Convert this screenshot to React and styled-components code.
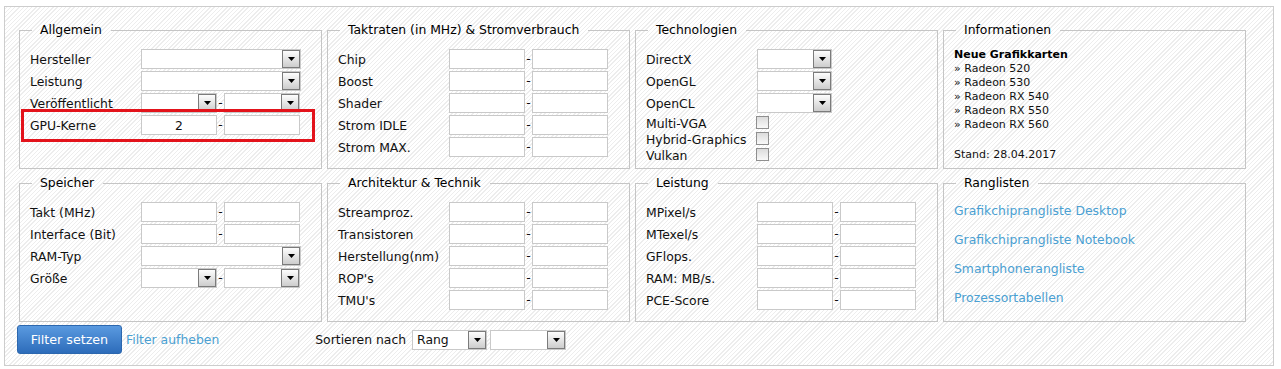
import styled, { createGlobalStyle } from "styled-components"

const GlobalStyle = createGlobalStyle`
    body {
        margin: 0;
        background: #fff;
        font-family: "DejaVu Sans", Verdana, sans-serif;
        font-size: 12.4px;
        color: #111;
    }
`

const Frame = styled.form`
    box-sizing: border-box;
    width: 1270px;
    margin: 6px 0 0 4px;
    padding: 15px 0 11px 12px;
    border: 1px solid #cdcdcd;
    background: repeating-linear-gradient(-45deg, #fff 0 2px, #ededed 2px 3px);
`

const PanelGrid = styled.div`
    display: grid;
    grid-template-columns: repeat(4, 303px);
    column-gap: 5px;
    row-gap: 6px;
    margin-left: 2px;
`

const Panel = styled.fieldset`
    margin: 0;
    padding: 0 10px;
    min-width: 0;
    border: 1px solid #c5c5c5;
`

const Legend = styled.legend`
    margin-left: 2px;
    padding: 0 9px 0 8px;
    line-height: 16px;
    color: #000;
`

const Body = styled.div`
    box-sizing: border-box;
    height: 130px;
    padding-top: 11px;
`

const Row = styled.div`
    position: relative;
    display: flex;
    align-items: center;
    height: 20px;
    margin-bottom: 2px;
`

const Label = styled.span`
    width: 111px;
    flex-shrink: 0;
    white-space: nowrap;
`

const Field = styled.input`
    box-sizing: border-box;
    width: ${p => p.$w || 76}px;
    height: 20px;
    margin: 0;
    padding: 0 3px;
    border: 1px solid #c9c9c9;
    background: #fff;
    font: inherit;
    color: #111;
    text-align: ${p => p.$align || "left"};
    outline: none;
`

const Dash = styled.span`
    width: 7px;
    text-align: center;
    line-height: 20px;
`

const SelectBox = styled.div`
    box-sizing: border-box;
    display: flex;
    align-items: center;
    width: ${p => p.$w}px;
    height: 20px;
    border: 1px solid #c9c9c9;
    background: #fff;
`

const SelectValue = styled.span`
    flex: 1;
    padding-left: 4px;
    white-space: nowrap;
    overflow: hidden;
`

const ArrowButton = styled.span`
    box-sizing: border-box;
    display: flex;
    align-items: center;
    justify-content: center;
    width: 18px;
    height: 18px;
    border: 1px solid #7b7b7b;
    background: linear-gradient(#fdfdfd, #cdcdcd);
`

const CheckRow = styled.div`
    display: flex;
    align-items: center;
    height: 16px;
`

const CheckBox = styled.span`
    box-sizing: border-box;
    width: 13px;
    height: 13px;
    margin: -2px 0 0 -1px;
    border: 1px solid #8f8f8f;
    background: linear-gradient(#dcdcdc, #f8f8f8);
`

const Highlight = styled.div`
    position: absolute;
    left: -9px;
    top: -6px;
    box-sizing: border-box;
    width: 294px;
    height: 33px;
    border: 3px solid #e3131b;
    pointer-events: none;
`

const InfoBody = styled.div`
    margin-top: -1px;
    font-size: 11px;
    line-height: 14px;
    color: #111;
`

const InfoTitle = styled.div`
    font-weight: bold;
    color: #000;
`

const Stand = styled.div`
    margin-top: 16px;
`

const RankLink = styled.a`
    display: block;
    line-height: 18px;
    margin-bottom: 11px;
    color: #4a9fd2;
    text-decoration: none;
`

const BottomBar = styled.div`
    display: flex;
    align-items: center;
    margin-top: 3px;
`

const SubmitButton = styled.button`
    box-sizing: border-box;
    width: 105px;
    height: 29px;
    margin: 0;
    border: 1px solid #2c67ae;
    border-radius: 3px;
    background: linear-gradient(#5a9ae0, #2d6cba);
    color: #fff;
    font-family: inherit;
    font-size: 12.7px;
`

const ResetLink = styled.a`
    margin-left: 4px;
    color: #4a9fd2;
    text-decoration: none;
`

const SortGroup = styled.div`
    display: flex;
    align-items: center;
    gap: 3px;
    margin-left: 96px;
`

const SortLabel = styled.span`
    margin-right: 3px;
`

const Select = ({ w, value }) => (
    <SelectBox $w={w}>
        <SelectValue>{value}</SelectValue>
        <ArrowButton>
            <svg width="7" height="4" viewBox="0 0 7 4"><path d="M0 0H7L3.5 4Z" fill="#000" /></svg>
        </ArrowButton>
    </SelectBox>
)

const Range = ({ label, value }) => (
    <Row>
        <Label>{label}</Label>
        <Field $align="center" defaultValue={value} />
        <Dash>-</Dash>
        <Field />
    </Row>
)

const SelectRange = ({ label }) => (
    <Row>
        <Label>{label}</Label>
        <Select w={76} />
        <Dash>-</Dash>
        <Select w={76} />
    </Row>
)

const SelectRow = ({ label, w = 160 }) => (
    <Row>
        <Label>{label}</Label>
        <Select w={w} />
    </Row>
)

const Check = ({ label }) => (
    <CheckRow>
        <Label>{label}</Label>
        <CheckBox />
    </CheckRow>
)

const newCards = ["Radeon 520", "Radeon 530", "Radeon RX 540", "Radeon RX 550", "Radeon RX 560"]

const rankings = [
    "Grafikchiprangliste Desktop",
    "Grafikchiprangliste Notebook",
    "Smartphonerangliste",
    "Prozessortabellen",
]

function App() {
    return (
        <>
            <GlobalStyle />
            <Frame onSubmit={e => e.preventDefault()}>
                <PanelGrid>
                    <Panel>
                        <Legend>Allgemein</Legend>
                        <Body>
                            <SelectRow label="Hersteller" />
                            <SelectRow label="Leistung" />
                            <SelectRange label="Veröffentlicht" />
                            <Row>
                                <Highlight />
                                <Label>GPU-Kerne</Label>
                                <Field $align="center" defaultValue="2" />
                                <Dash>-</Dash>
                                <Field />
                            </Row>
                        </Body>
                    </Panel>
                    <Panel>
                        <Legend>Taktraten (in MHz) &amp; Stromverbrauch</Legend>
                        <Body>
                            {["Chip", "Boost", "Shader", "Strom IDLE", "Strom MAX."].map(l => <Range key={l} label={l} />)}
                        </Body>
                    </Panel>
                    <Panel>
                        <Legend>Technologien</Legend>
                        <Body>
                            <SelectRow label="DirectX" w={75} />
                            <SelectRow label="OpenGL" w={75} />
                            <SelectRow label="OpenCL" w={75} />
                            <Check label="Multi-VGA" />
                            <Check label="Hybrid-Graphics" />
                            <Check label="Vulkan" />
                        </Body>
                    </Panel>
                    <Panel>
                        <Legend>Informationen</Legend>
                        <Body>
                            <InfoBody>
                                <InfoTitle>Neue Grafikkarten</InfoTitle>
                                {newCards.map(c => <div key={c}>» {c}</div>)}
                                <Stand>Stand: 28.04.2017</Stand>
                            </InfoBody>
                        </Body>
                    </Panel>

                    <Panel>
                        <Legend>Speicher</Legend>
                        <Body>
                            <Range label="Takt (MHz)" />
                            <Range label="Interface (Bit)" />
                            <SelectRow label="RAM-Typ" />
                            <SelectRange label="Größe" />
                        </Body>
                    </Panel>
                    <Panel>
                        <Legend>Architektur &amp; Technik</Legend>
                        <Body>
                            {["Streamproz.", "Transistoren", "Herstellung(nm)", "ROP's", "TMU's"].map(l => <Range key={l} label={l} />)}
                        </Body>
                    </Panel>
                    <Panel>
                        <Legend>Leistung</Legend>
                        <Body>
                            {["MPixel/s", "MTexel/s", "GFlops.", "RAM: MB/s.", "PCE-Score"].map(l => <Range key={l} label={l} />)}
                        </Body>
                    </Panel>
                    <Panel>
                        <Legend>Ranglisten</Legend>
                        <Body>
                            {rankings.map(r => <RankLink key={r} href="#">{r}</RankLink>)}
                        </Body>
                    </Panel>
                </PanelGrid>

                <BottomBar>
                    <SubmitButton type="submit">Filter setzen</SubmitButton>
                    <ResetLink href="#">Filter aufheben</ResetLink>
                    <SortGroup>
                        <SortLabel>Sortieren nach</SortLabel>
                        <Select w={75} value="Rang" />
                        <Select w={76} />
                    </SortGroup>
                </BottomBar>
            </Frame>
        </>
    )
}

export default App
